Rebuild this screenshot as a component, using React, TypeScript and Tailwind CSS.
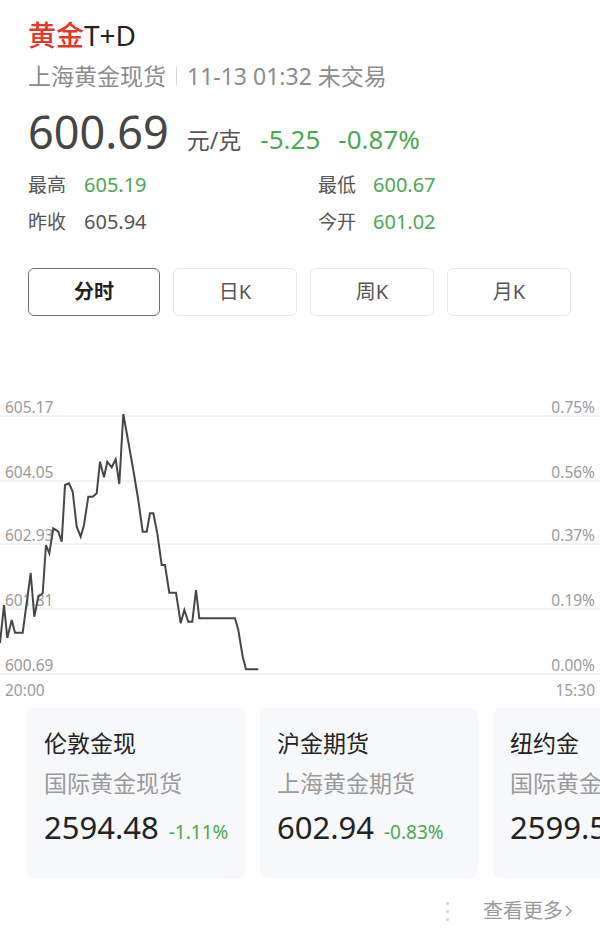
import React from "react";

type Card = {
  title: string;
  sub: string;
  price: string;
  change: string;
};

const cards: Card[] = [
  { title: "伦敦金现", sub: "国际黄金现货", price: "2594.48", change: "-1.11%" },
  { title: "沪金期货", sub: "上海黄金期货", price: "602.94", change: "-0.83%" },
  { title: "纽约金", sub: "国际黄金现货", price: "2599.50", change: "-1.02%" },
];

const tabs = ["分时", "日K", "周K", "月K"];

// points traced off the intraday line, in page coords
const raw: [number, number][] = [
  [0, 643], [4, 605], [7.3, 638], [11.7, 620], [15, 632.7], [22.7, 632.7],
  [30.7, 573], [34.3, 616.7], [38.3, 596.7], [42.7, 593.3], [46, 545],
  [49.3, 553.3], [53.3, 528.3], [58.3, 531.7], [61.7, 541.7], [65, 485],
  [69, 483.3], [72.7, 491.7], [76.7, 526.7], [80.7, 536.7], [84, 525],
  [88.3, 496.7], [92.7, 496.7], [96.7, 493.3], [100, 461.7], [104, 477.3],
  [107.3, 461.7], [111.7, 467.3], [115.7, 459.3], [119.3, 484], [123.3, 414],
  [128.3, 441.7], [133.3, 470], [138.3, 500], [142.7, 531.7], [146.7, 531.7],
  [150, 513.3], [153.3, 513.3], [157.3, 533.3], [161.7, 565], [165, 565],
  [169.3, 592.7], [176, 592.7], [180.7, 623.3], [184.3, 610], [188.3, 621.7],
  [192.3, 621.7], [196, 590], [199.3, 618.3], [235, 618.3], [238.3, 630],
  [242.7, 656.7], [246, 669.3], [258.3, 669.3],
];

const CHART_TOP = 396;
const linePoints = raw.map(([x, y]) => `${x},${(y - CHART_TOP).toFixed(1)}`).join(" ");

const grid = [
  { y: 20, left: "605.17", right: "0.75%" },
  { y: 85, left: "604.05", right: "0.56%" },
  { y: 148, left: "602.93", right: "0.37%" },
  { y: 213, left: "601.81", right: "0.19%" },
  { y: 278, left: "600.69", right: "0.00%" },
];

const Chart: React.FC = () => (
  <svg width={600} height={306} viewBox="0 0 600 306" className="block">
    {grid.map((g) => (
      <g key={g.left}>
        <line x1={0} x2={600} y1={g.y} y2={g.y} stroke="#e6e6e6" strokeWidth={1} />
        <text x={5} y={g.y - 3} fontSize={15.5} fill="#9a9a9a">
          {g.left}
        </text>
        <text x={595} y={g.y - 3} fontSize={15.5} fill="#9a9a9a" textAnchor="end">
          {g.right}
        </text>
      </g>
    ))}
    <polyline
      points={linePoints}
      fill="none"
      stroke="#464646"
      strokeWidth={2}
      strokeLinejoin="miter"
    />
    <text x={5} y={300} fontSize={15.5} fill="#9a9a9a">
      20:00
    </text>
    <text x={595} y={300} fontSize={15.5} fill="#9a9a9a" textAnchor="end">
      15:30
    </text>
  </svg>
);

const App: React.FC = () => {
  return (
    <div
      className="h-[940px] w-[600px] overflow-hidden bg-white"
      style={{ fontFamily: '"Noto Sans", "Noto Sans CJK SC", sans-serif' }}
    >
      {/* Header */}
      <div className="px-[28px] pt-[18px]">
        <div className="flex h-[34px] items-center text-[28px] leading-none">
          <span className="font-medium text-[#e5362c]">黄金</span>
          <span className="text-[#222]">T+D</span>
        </div>

        <div className="mt-[11px] flex h-[26px] items-center text-[23px] text-[#8c8c8c]">
          <span>上海黄金现货</span>
          <span className="mx-[10px] h-[18px] w-px bg-[#d6d6d6]" />
          <span>11-13 01:32 未交易</span>
        </div>

        <div className="mt-[18px] flex h-[50px] items-baseline">
          <span className="text-[45px] leading-[50px] text-[#454545]">600.69</span>
          <span className="ml-[18px] text-[23px] text-[#555]">元/克</span>
          <span className="ml-[19px] text-[26px] text-[#4da752]">-5.25</span>
          <span className="ml-[18px] text-[26px] text-[#4da752]">-0.87%</span>
        </div>

        <div className="mt-[14px] grid grid-cols-[290px_1fr] gap-y-[9px] text-[19px] leading-[28px]">
          <div className="flex">
            <span className="w-[56px] text-[#555]">最高</span>
            <span className="text-[20px] text-[#4da752]">605.19</span>
          </div>
          <div className="flex">
            <span className="w-[55px] text-[#555]">最低</span>
            <span className="text-[20px] text-[#4da752]">600.67</span>
          </div>
          <div className="flex">
            <span className="w-[56px] text-[#555]">昨收</span>
            <span className="text-[20px] text-[#555]">605.94</span>
          </div>
          <div className="flex">
            <span className="w-[55px] text-[#555]">今开</span>
            <span className="text-[20px] text-[#4da752]">601.02</span>
          </div>
        </div>

        {/* Period tabs */}
        <div className="mt-[32px] flex gap-[13px]">
          {tabs.map((t, i) => (
            <div
              key={t}
              className={
                i === 0
                  ? "flex h-[48px] w-[132px] items-center justify-center rounded-[6px] border border-[#6e6e6e] text-[20px] font-semibold text-[#222]"
                  : "flex h-[48px] w-[124px] items-center justify-center rounded-[6px] border border-[#e9e9e9] text-[20px] text-[#555]"
              }
            >
              {t}
            </div>
          ))}
        </div>
      </div>

      {/* Intraday chart */}
      <div className="mt-[80px]">
        <Chart />
      </div>

      {/* Related quotes */}
      <div className="mt-[6px] flex gap-[15px] pl-[27px]">
        {cards.map((c) => (
          <div
            key={c.title}
            className="h-[170px] w-[218px] shrink-0 rounded-[8px] bg-[#f7f8fa] px-[17px] pt-[22px]"
          >
            <div className="text-[23px] leading-[26px] text-[#222]">{c.title}</div>
            <div className="mt-[14px] text-[23px] leading-[26px] text-[#9a9a9a]">{c.sub}</div>
            <div className="mt-[12px] flex items-baseline gap-[10px]">
              <span className="text-[31px] leading-[38px] text-[#222]">{c.price}</span>
              <span className="text-[19px] text-[#4da752]">{c.change}</span>
            </div>
          </div>
        ))}
      </div>

      {/* More link */}
      <div className="mt-[21px] flex h-[24px] items-center justify-end pr-[27px]">
        <div className="mr-[34px] flex flex-col gap-[5px]">
          <span className="h-[3px] w-[3px] rounded-full bg-[#d0d0d0]" />
          <span className="h-[3px] w-[3px] rounded-full bg-[#d0d0d0]" />
          <span className="h-[3px] w-[3px] rounded-full bg-[#d0d0d0]" />
        </div>
        <span className="text-[20px] text-[#9a9a9a]">查看更多</span>
        <svg width={9} height={14} viewBox="0 0 9 14" className="ml-[1px]">
          <path d="M2 2l5 5-5 5" fill="none" stroke="#9a9a9a" strokeWidth={1.4} />
        </svg>
      </div>
    </div>
  );
};

export default App;
